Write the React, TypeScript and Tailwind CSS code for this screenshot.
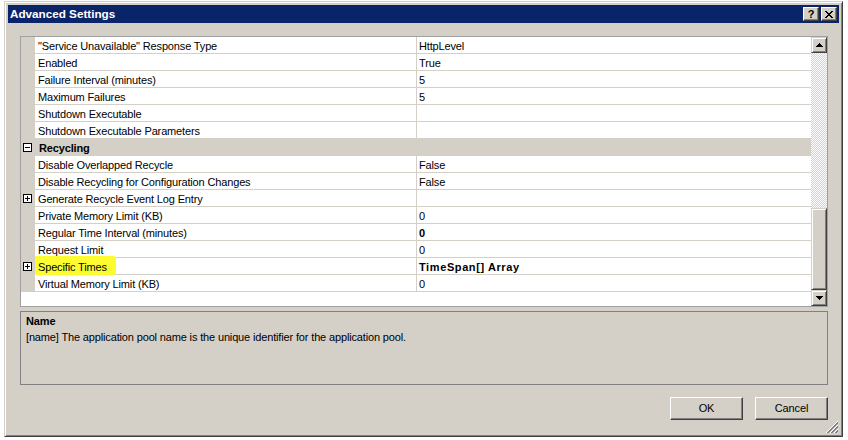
import React from 'react';

type Row =
  | { kind: 'category'; name: string }
  | { kind: 'prop'; name: string; value: string; bold?: boolean; expandable?: boolean; highlight?: boolean };

const rows: Row[] = [
  { kind: 'prop', name: '"Service Unavailable" Response Type', value: 'HttpLevel' },
  { kind: 'prop', name: 'Enabled', value: 'True' },
  { kind: 'prop', name: 'Failure Interval (minutes)', value: '5' },
  { kind: 'prop', name: 'Maximum Failures', value: '5' },
  { kind: 'prop', name: 'Shutdown Executable', value: '' },
  { kind: 'prop', name: 'Shutdown Executable Parameters', value: '' },
  { kind: 'category', name: 'Recycling' },
  { kind: 'prop', name: 'Disable Overlapped Recycle', value: 'False' },
  { kind: 'prop', name: 'Disable Recycling for Configuration Changes', value: 'False' },
  { kind: 'prop', name: 'Generate Recycle Event Log Entry', value: '', expandable: true },
  { kind: 'prop', name: 'Private Memory Limit (KB)', value: '0' },
  { kind: 'prop', name: 'Regular Time Interval (minutes)', value: '0', bold: true },
  { kind: 'prop', name: 'Request Limit', value: '0' },
  { kind: 'prop', name: 'Specific Times', value: 'TimeSpan[] Array', bold: true, expandable: true, highlight: true },
  { kind: 'prop', name: 'Virtual Memory Limit (KB)', value: '0' },
];

const font = "font-['Liberation_Sans',Arial,sans-serif]";

// classic win2k 3D edges
const raised =
  'border border-t-white border-l-white border-b-[#404040] border-r-[#404040] shadow-[inset_-1px_-1px_0_#808080]';
const raisedSoft =
  'border border-t-[#d4d0c8] border-l-[#d4d0c8] border-b-[#404040] border-r-[#404040] shadow-[inset_1px_1px_0_#ffffff,inset_-1px_-1px_0_#808080]';

const ExpandBox: React.FC<{ open?: boolean }> = ({ open }) => (
  <svg width="9" height="9" viewBox="0 0 9 9" shapeRendering="crispEdges">
    <rect x="0.5" y="0.5" width="8" height="8" fill="#ffffff" stroke="#000000" />
    <path d="M2 4.5h5" stroke="#000000" />
    {!open && <path d="M4.5 2v5" stroke="#000000" />}
  </svg>
);

const Arrow: React.FC<{ down?: boolean }> = ({ down }) => (
  <svg width="7" height="4" viewBox="0 0 7 4" shapeRendering="crispEdges">
    {down ? (
      <path d="M0 0h7v1H0zM1 1h5v1H1zM2 2h3v1H2zM3 3h1v1H3z" fill="#000" />
    ) : (
      <path d="M3 0h1v1H3zM2 1h3v1H2zM1 2h5v1H1zM0 3h7v1H0z" fill="#000" />
    )}
  </svg>
);

const PropRow: React.FC<{ row: Row }> = ({ row }) => {
  if (row.kind === 'category') {
    return (
      <div className="flex h-[17px] shrink-0 bg-[#d4d0c8] overflow-hidden">
        <div className="w-[14px] shrink-0 flex items-center pl-[2px]">
          <ExpandBox open />
        </div>
        <span className="pl-[4px] font-bold leading-[18px]">{row.name}</span>
      </div>
    );
  }
  return (
    <div className="flex h-[17px] shrink-0">
      <div className="relative z-10 w-[14px] shrink-0 flex items-center pl-[2px] bg-[#d4d0c8]">
        {row.expandable && <ExpandBox />}
      </div>
      <div className="relative w-[382px] shrink-0 border-b border-r border-[#d4d0c8] pl-[3px] leading-[18px] whitespace-nowrap">
        {row.highlight && (
          <div className="absolute left-[-5px] top-[-2px] w-[86px] h-[19px] rounded-[3px] bg-[#fcfc30]" />
        )}
        <span className="relative">{row.name}</span>
      </div>
      <div
        className={`flex-1 border-b border-[#d4d0c8] pl-[2px] leading-[18px] whitespace-nowrap overflow-hidden ${
          row.bold ? 'font-bold tracking-[0.6px]' : ''
        }`}
      >
        {row.value}
      </div>
    </div>
  );
};

const Scrollbar: React.FC = () => (
  <div className="w-[16px] shrink-0 flex flex-col">
    <div className={`h-[16px] shrink-0 bg-[#d4d0c8] flex items-center justify-center ${raisedSoft}`}>
      <Arrow />
    </div>
    <div className="flex-1 bg-[image:repeating-conic-gradient(#d4d0c8_0_25%,#ffffff_0_50%)] bg-[length:2px_2px]" />
    <div className={`h-[82px] shrink-0 bg-[#d4d0c8] ${raisedSoft}`} />
    <div className={`h-[16px] shrink-0 bg-[#d4d0c8] flex items-center justify-center ${raisedSoft}`}>
      <Arrow down />
    </div>
  </div>
);

const App: React.FC = () => {
  return (
    <div className={`w-[848px] h-[440px] overflow-hidden bg-white pl-[4px] pt-[1px] text-[11px] text-black tracking-[-0.15px] ${font}`}>
      <div
        className={`relative w-[839px] h-[436px] bg-[#d4d0c8] p-[3px] flex flex-col border border-t-[#d4d0c8] border-l-[#d4d0c8] border-b-[#404040] border-r-[#404040] shadow-[inset_1px_1px_0_#ffffff,inset_-1px_-1px_0_#808080]`}
      >
        {/* title bar */}
        <div className="h-[18px] shrink-0 bg-[#0a246a] flex items-center pl-[2px] pr-[2px]">
          <span className="flex-1 text-white font-bold text-[11.7px] tracking-normal leading-[18px]">
            Advanced Settings
          </span>
          <div className="flex gap-[2px]">
            <div className={`w-[16px] h-[14px] bg-[#d4d0c8] flex items-center justify-center ${raised}`}>
              <span className="font-bold text-[11px] leading-[11px] tracking-normal">?</span>
            </div>
            <div className={`w-[16px] h-[14px] bg-[#d4d0c8] flex items-center justify-center ${raised}`}>
              <svg width="8" height="7" viewBox="0 0 8 7" shapeRendering="crispEdges">
                <path
                  d="M0 0h2v1H0zM1 1h2v1H1zM2 2h2v1H2zM3 3h2v1H3zM2 4h2v1H2zM1 5h2v1H1zM0 6h2v1H0zM6 0h2v1H6zM5 1h2v1H5zM4 2h2v1H4zM4 4h2v1H4zM5 5h2v1H5zM6 6h2v1H6z"
                  fill="#000"
                />
              </svg>
            </div>
          </div>
        </div>

        <div className="flex-1 flex flex-col pt-[13px] pl-[12px] pr-[11px]">
          {/* property grid */}
          <div className="w-[808px] h-[271px] shrink-0 flex border border-[#a0a0a0] bg-white">
            <div className="flex-1 flex flex-col">
              {rows.map((row, i) => (
                <PropRow key={i} row={row} />
              ))}
            </div>
            <Scrollbar />
          </div>

          {/* description pane */}
          <div className="mt-[4px] h-[74px] shrink-0 border border-[#808080] px-[5px] pt-[2px]">
            <p className="font-bold leading-[15px]">Name</p>
            <p className="leading-[17px]">
              [name] The application pool name is the unique identifier for the application pool.
            </p>
          </div>

          <div className="mt-[12px] flex justify-end gap-[12px]">
            <button className={`w-[73px] h-[23px] bg-[#d4d0c8] ${raised}`}>OK</button>
            <button className={`w-[73px] h-[23px] bg-[#d4d0c8] ${raised}`}>Cancel</button>
          </div>
        </div>

        {/* size grip */}
        <svg
          className="absolute right-[4px] bottom-[3px]"
          width="12"
          height="12"
          viewBox="0 0 12 12"
          shapeRendering="crispEdges"
        >
          {[0, 4, 8].map((o) => (
            <g key={o}>
              <path d={`M${12} ${o} L${o} 12`} stroke="#ffffff" strokeWidth="1" />
              <path d={`M${12} ${o + 1} L${o + 1} 12`} stroke="#808080" strokeWidth="1" />
              <path d={`M${12} ${o + 2} L${o + 2} 12`} stroke="#808080" strokeWidth="1" />
            </g>
          ))}
        </svg>
      </div>
    </div>
  );
};

export default App;
